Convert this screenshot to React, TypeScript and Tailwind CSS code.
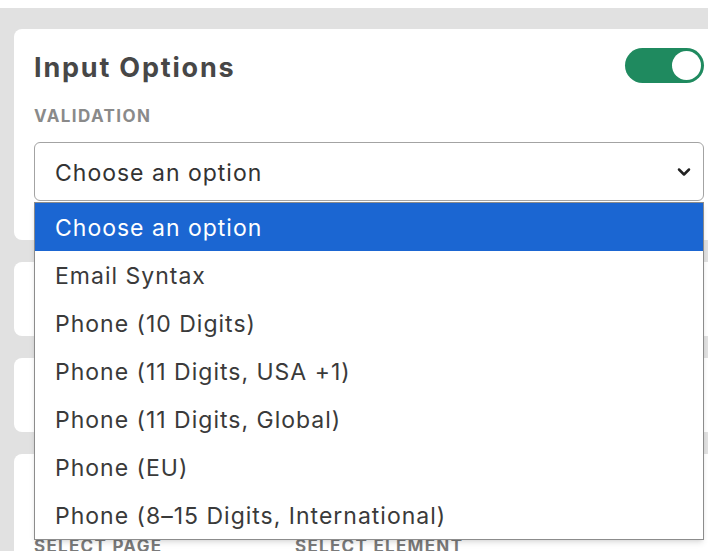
import { ChevronDown } from 'lucide-react';

const OPTIONS = [
  'Choose an option',
  'Email Syntax',
  'Phone (10 Digits)',
  'Phone (11 Digits, USA +1)',
  'Phone (11 Digits, Global)',
  'Phone (EU)',
  'Phone (8–15 Digits, International)',
];

const font = { fontFamily: 'Inter, "Noto Sans", sans-serif' };

export default function App() {
  return (
    <div className="h-[551px] w-full overflow-hidden bg-white pt-2" style={font}>
      <div className="flex h-full flex-col gap-[22px] bg-[#e1e1e1] pl-[14px] pt-[21px]">
        {/* Input options card */}
        <section className="relative z-10 h-[211px] w-[720px] shrink-0 rounded-lg bg-white px-5">
          <div className="flex w-[670px] items-start justify-between pt-[19px]">
            <h2 className="pt-[3px] text-[27px] font-bold leading-[34px] tracking-[1.8px] text-[#474747]">
              Input Options
            </h2>
            <Toggle />
          </div>
          <div className="mt-[21px] text-[17px] font-bold leading-5 tracking-[1.4px] text-[#8a8a8a]">
            VALIDATION
          </div>
          <div className="relative mt-[16px] w-[670px]">
            <div className="flex h-[59px] items-center justify-between rounded-md border border-[#a3a3a3] bg-white pl-5 pr-[9px]">
              <span className="pt-[3px] text-[23px] tracking-[1px] text-[#333]">Choose an option</span>
              <ChevronDown size={20} strokeWidth={3} className="text-[#222]" />
            </div>

            {/* open option list */}
            <ul className="absolute left-0 top-[60px] w-[670px] border border-[#8c8c8c] bg-white shadow-md">
              {OPTIONS.map((opt, i) => (
                <li
                  key={opt}
                  className={
                    i === 0
                      ? 'flex h-[48px] items-center bg-[#1b66d2] pl-5 pt-[2px] text-[23px] tracking-[1px] text-white'
                      : 'flex h-[48px] items-center pl-5 pt-[2px] text-[23px] tracking-[1px] text-[#3a3a3a]'
                  }
                >
                  {opt}
                </li>
              ))}
            </ul>
          </div>
        </section>

        <section className="h-[74px] w-[720px] shrink-0 rounded-lg bg-white" />
        <section className="h-[74px] w-[720px] shrink-0 rounded-lg bg-white" />

        <section className="h-[200px] w-[720px] shrink-0 rounded-lg bg-white px-5 pt-[80px]">
          <div className="flex text-[17px] font-bold uppercase tracking-[1.3px] text-[#7a7a7a]">
            <span className="w-[261px]">Select page</span>
            <span>Select element</span>
          </div>
        </section>
      </div>
    </div>
  );
}

function Toggle() {
  return (
    <div className="flex h-[35px] w-[79px] items-center justify-end rounded-full bg-[#1f8a5f] pr-[3px]">
      <div className="h-[29px] w-[29px] rounded-full bg-white" />
    </div>
  );
}
